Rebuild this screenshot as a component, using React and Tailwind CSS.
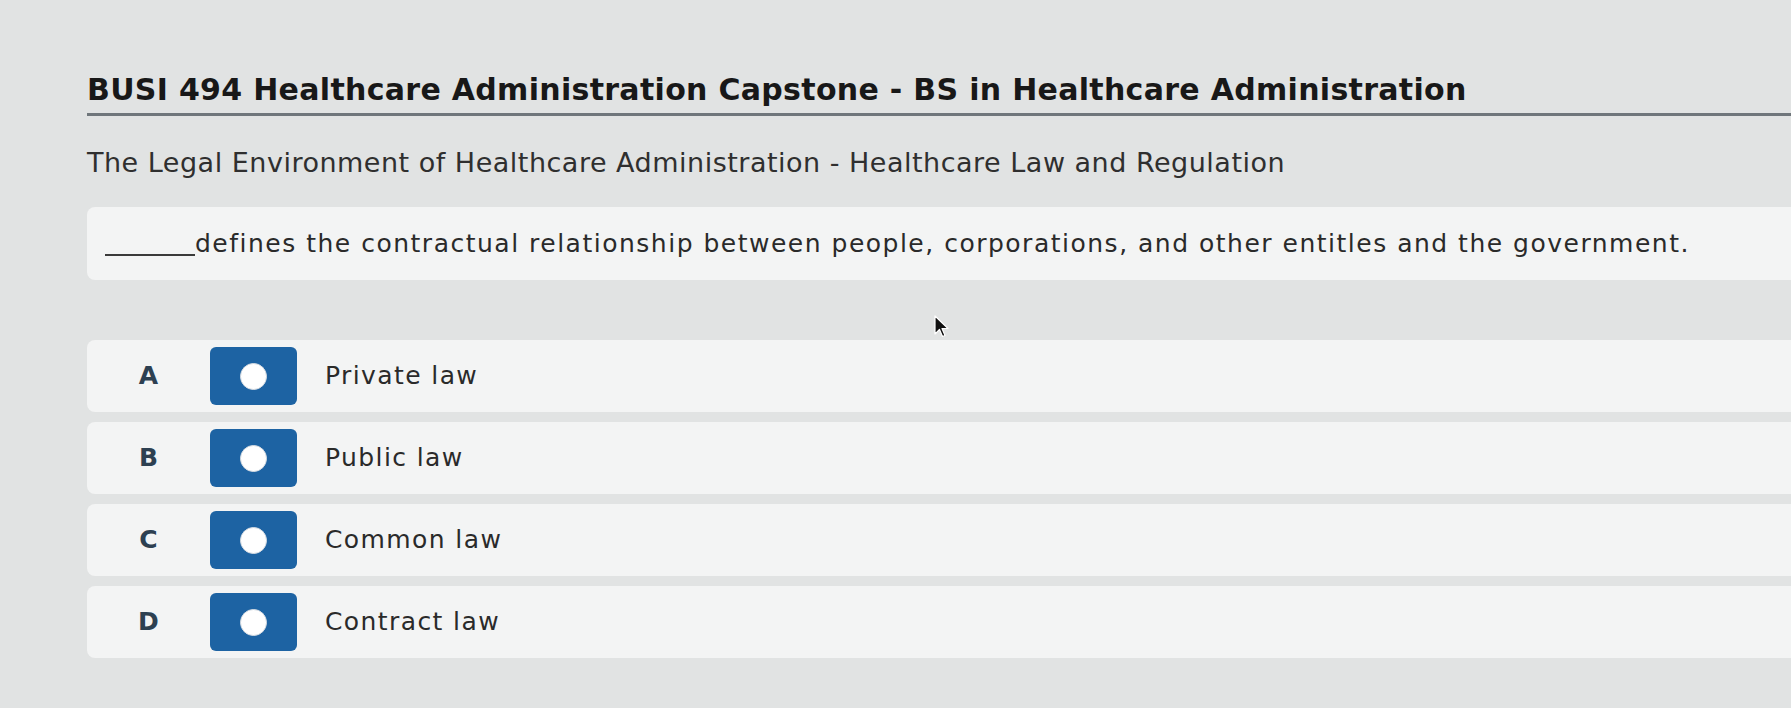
import React from 'react';

const options = [
  { letter: 'A', text: 'Private law' },
  { letter: 'B', text: 'Public law' },
  { letter: 'C', text: 'Common law' },
  { letter: 'D', text: 'Contract law' },
];

const Cursor = () => (
  <svg className="absolute left-[934px] top-[315px]" width="16" height="24" viewBox="0 0 16 24">
    <path d="M1 1 L1 19 L5.5 14.5 L8.5 21.5 L11 20.5 L8 13.5 L14 13.5 Z" fill="#111" stroke="#fff" strokeWidth="1.2" strokeLinejoin="round" />
  </svg>
);

const App = () => {
  return (
    <div className="relative min-h-[708px] w-full overflow-hidden bg-[#e1e3e3] font-['DejaVu_Sans','Liberation_Sans',sans-serif]">
      <div className="pl-[87px] pt-[72px]">
        <h1 className="h-[36px] text-[30px] font-bold leading-[36px] tracking-[0.3px] text-[#181818] whitespace-nowrap">
          BUSI 494 Healthcare Administration Capstone - BS in Healthcare Administration
        </h1>
        <div className="mt-[5px] h-[3px] bg-[#6f767b]" />

        <p className="mt-[31px] h-[32px] text-[27px] leading-[32px] tracking-[0.5px] text-[#2f2f2f] whitespace-nowrap">
          The Legal Environment of Healthcare Administration - Healthcare Law and Regulation
        </p>

        <div className="mt-[28px] flex h-[73px] items-center rounded-l-lg bg-[#f3f4f4] pl-[18px]">
          <p className="text-[25px] leading-[30px] tracking-[1.5px] text-[#2a2a2a] whitespace-nowrap">
            <span className="inline-block w-[90px] border-b-2 border-[#3a3a3a] align-[-4px]" />
            defines the contractual relationship between people, corporations, and other entitles and the government.
          </p>
        </div>

        <div className="mt-[60px] flex flex-col gap-[10px]">
          {options.map((o) => (
            <div key={o.letter} className="flex h-[72px] items-center rounded-l-lg bg-[#f3f4f4]">
              <div className="w-[123px] text-center text-[25px] font-bold text-[#2d4051]">{o.letter}</div>
              <div className="flex h-[58px] w-[87px] items-center justify-center rounded-md bg-[#1d63a3]">
                <div className="h-[27px] w-[27px] rounded-full border border-[#d8dde3] bg-white" />
              </div>
              <div className="pl-[28px] text-[25px] tracking-[1.4px] text-[#2a2a2a]">{o.text}</div>
            </div>
          ))}
        </div>
      </div>
      <Cursor />
    </div>
  );
};

export default App;
